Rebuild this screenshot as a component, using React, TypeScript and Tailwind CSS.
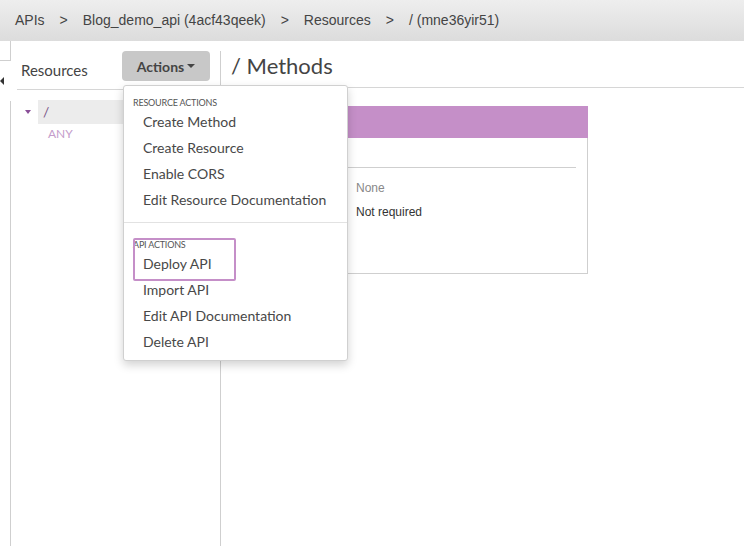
import React from "react";

const lato = { fontFamily: "Lato, 'Noto Sans', sans-serif" };
const arial = { fontFamily: "'Liberation Sans', Arial, sans-serif" };

function Item({ children }: { children: React.ReactNode }) {
  return (
    <div className="h-[26px] leading-[26px] pl-[19px] text-[14px] text-[#484848]">{children}</div>
  );
}

export default function App() {
  return (
    <div className="w-[744px] h-[546px] overflow-hidden bg-white relative" style={lato}>
      {/* breadcrumb */}
      <div
        className="h-[41px] flex items-center gap-[15px] pl-[15px] pb-[1px] text-[14px] text-[#444] bg-[linear-gradient(#eeeeee,#dcdcdc)]"
        style={arial}
      >
        <span>APIs</span>
        <span>&gt;</span>
        <span>Blog_demo_api (4acf43qeek)</span>
        <span>&gt;</span>
        <span>Resources</span>
        <span>&gt;</span>
        <span>/ (mne36yir51)</span>
      </div>

      <div className="flex h-[505px]">
        {/* collapse strip */}
        <div className="w-[11px] flex flex-col">
          <div className="h-[20px] border-r border-b border-[#cfcfcf]" />
          <div className="h-[40px] flex items-center">
            <div className="w-0 h-0 border-y-[4px] border-y-transparent border-r-[4px] border-r-[#333]" />
          </div>
          <div className="flex-1 border-r border-[#cfcfcf]" />
        </div>

        {/* left panel */}
        <div className="w-[210px] mt-[10px] border-r border-[#cfcfcf] flex flex-col">
          <div className="ml-[6px] h-[39px] border-b border-[#d6d6d6] flex items-start justify-between">
            <span className="pl-[4px] leading-[38px] text-[15px] text-[#444]">Resources</span>
            <div className="mr-[10px] w-[88px] h-[30px] rounded-[4px] bg-[#c8c8c8] flex items-center justify-center gap-[3px] text-[14px] font-bold text-[#444]">
              <span>Actions</span>
              <span className="w-0 h-0 border-x-[4px] border-x-transparent border-t-[4px] border-t-[#444]" />
            </div>
          </div>
          <div className="mt-[10px] flex h-[24px]">
            <div className="w-[27px] flex items-center pl-[14px]">
              <span className="w-0 h-0 border-x-[3.5px] border-x-transparent border-t-[4px] border-t-[#8a4f98]" />
            </div>
            <div className="flex-1 bg-[#ececec] pl-[5px] leading-[24px] text-[14px] text-[#7a5588]">/</div>
          </div>
          <div className="pl-[37px] mt-[1px] text-[12px] leading-[18px] text-[#c49ccb]">ANY</div>
        </div>

        {/* right area */}
        <div className="flex-1 flex flex-col">
          <div className="h-[47px] border-b border-[#d6d6d6] pl-[10px] pt-[9px] text-[22px] leading-[32px] text-[#444]">
            / Methods
          </div>
          <div className="ml-[17px] mt-[18px] w-[350px] h-[168px] border border-[#cfcfcf] flex flex-col" style={arial}>
            <div className="h-[32px] bg-[#c58fc8] -mx-[1px] -mt-[1px]" />
            <div className="mx-[11px] mt-[29px] border-t border-[#cfcfcf]" />
            <div className="flex mt-[8px] text-[12px] leading-[24px]">
              <div className="w-[117px]" />
              <div>
                <div className="text-[#888]">None</div>
                <div className="text-[#333]">Not required</div>
              </div>
            </div>
          </div>
        </div>
      </div>

      {/* dropdown */}
      <div className="absolute left-[123px] top-[85px] w-[225px] h-[276px] bg-white border border-[#d0d0d0] rounded-[3px] shadow-[0_4px_10px_rgba(0,0,0,0.18)] flex flex-col">
        <div className="pt-[10px]">
          <div className="h-[13px] leading-[13px] pl-[9px] text-[9px] uppercase text-[#555] tracking-[-0.2px]">Resource Actions</div>
          <Item>Create Method</Item>
          <Item>Create Resource</Item>
          <Item>Enable CORS</Item>
          <Item>Edit Resource Documentation</Item>
        </div>
        <div className="mt-[9px] border-t border-[#e2e2e2]" />
        <div className="pt-[15px]">
          <div className="h-[13px] leading-[13px] pl-[9px] text-[9px] uppercase text-[#555] tracking-[-0.2px]">API Actions</div>
          <Item>Deploy API</Item>
          <Item>Import API</Item>
          <Item>Edit API Documentation</Item>
          <Item>Delete API</Item>
        </div>
        <div className="absolute left-[9px] top-[152px] w-[103px] h-[43px] border-2 border-[#c58fc8] rounded-[2px]" />
      </div>
    </div>
  );
}
